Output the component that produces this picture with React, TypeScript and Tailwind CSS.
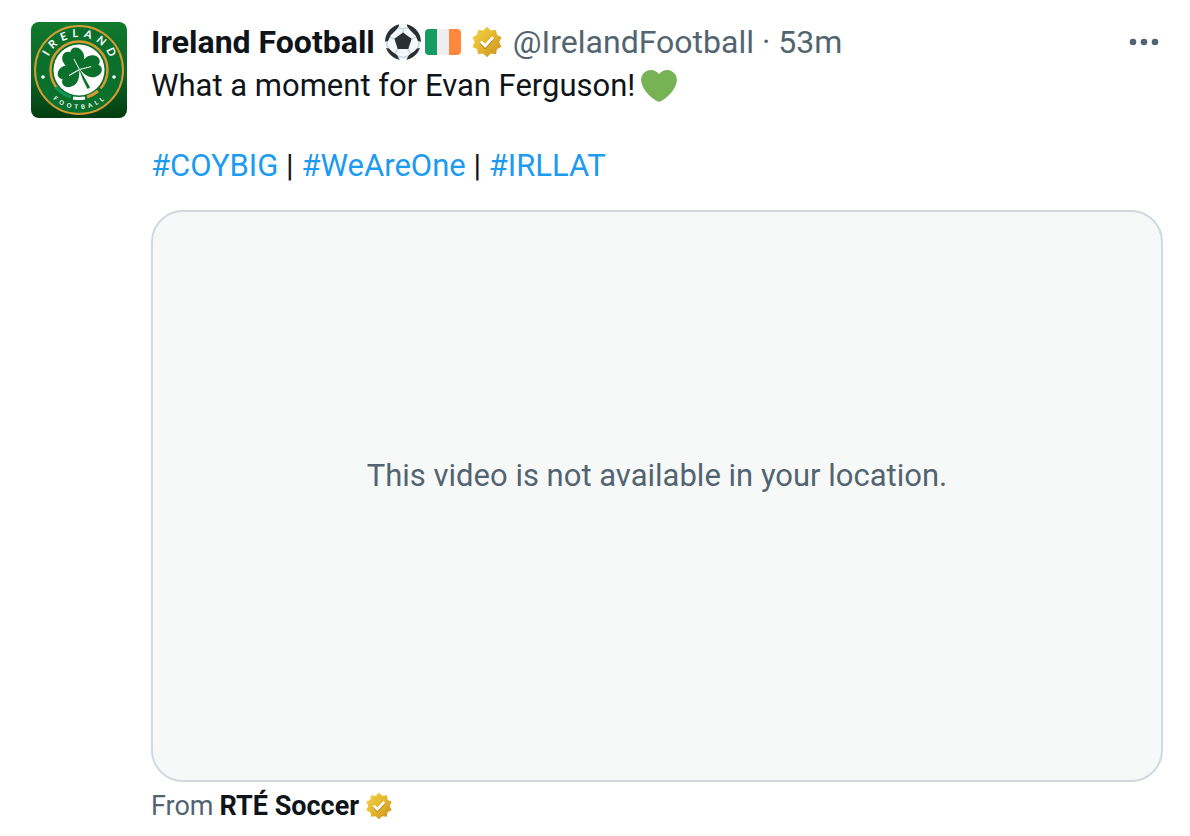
import React from 'react';

const hashtags = ['#COYBIG', '#WeAreOne', '#IRLLAT'];

const Avatar: React.FC = () => (
  <svg viewBox="0 0 96 96" className="h-24 w-24 shrink-0 rounded-lg" role="img" aria-label="Ireland Football crest">
    <defs>
      <linearGradient id="crest-bg" x1="0" y1="0" x2="0" y2="1">
        <stop offset="0" stopColor="#0f7a2c" />
        <stop offset="0.6" stopColor="#0b6125" />
        <stop offset="1" stopColor="#033d10" />
      </linearGradient>
      <path id="crest-top" d="M21 67A33 33 0 1 1 75 67" />
      <path id="crest-bottom" d="M9 48a39 39 0 0 0 78 0" />
    </defs>
    <rect width="96" height="96" fill="url(#crest-bg)" />
    <circle cx="48" cy="48" r="44" fill="#0a702c" stroke="#d69a32" strokeWidth="2" />
    <circle cx="48" cy="48" r="28.5" fill="none" stroke="#d69a32" strokeWidth="2.5" />
    <circle cx="48" cy="48" r="25.5" fill="#fff" />
    {/* Coloured arc under the shamrock */}
    <path d="M26 67A29 29 0 0 0 70 67" fill="none" stroke="#0a702c" strokeWidth="5" />
    <path d="M25 65A29 29 0 0 0 40 75" fill="none" stroke="#129653" strokeWidth="3" />
    <path d="M42 76q6 1 12 0" fill="none" stroke="#fff" strokeWidth="3" />
    <path d="M56 75A29 29 0 0 0 67 69" fill="none" stroke="#d69a32" strokeWidth="3" />
    <g fill="#0a702c" stroke="#fff" strokeWidth="0.9">
      <path d="M48 47q3 10 8.500 20l2.500-1.500q-3-6-11-19z" stroke="none" />
      {[-28, 76, 240].map((angle) => (
        <g key={angle} transform={`translate(48.500 47.500) rotate(${angle})`}>
          <path
            d="M0 0C-4-3-11.500-6-11-14C-10.500-22-3-24 0-19.500C3-24 10.500-22 11-14C11.500-6 4-3 0 0z"
            stroke="none"
          />
          <path d="M0 0V-12" />
        </g>
      ))}
    </g>
    <circle cx="12" cy="55" r="1.8" fill="#fff" />
    <circle cx="83" cy="55" r="1.8" fill="#fff" />
    <g fill="#fff" textAnchor="middle" fontFamily="Lato, sans-serif" fontWeight="700">
      <text fontSize="11" letterSpacing="5">
        <textPath href="#crest-top" startOffset="52%">IRELAND</textPath>
      </text>
      <text fontSize="6" letterSpacing="3.5">
        <textPath href="#crest-bottom" startOffset="51%">FOOTBALL</textPath>
      </text>
    </g>
  </svg>
);

const SoccerBall: React.FC = () => (
  <svg viewBox="0 0 36 36" className="h-9 w-9 shrink-0" role="img" aria-label="Soccer ball">
    <defs>
      <clipPath id="ball">
        <circle cx="18" cy="18" r="18" />
      </clipPath>
    </defs>
    <g clipPath="url(#ball)">
      <rect width="36" height="36" fill="#f5f8fa" />
      <path
        d="M18 9V4M26.500 15l5-2M23 25l3 5M13 25l-3 5M9.500 15l-5-2M11 3l7 2 7-2M3 13l-1 8 2 5M33 13l1 8-2 5M12 32l6 1.500 6-1.500"
        fill="none"
        stroke="#ccd6dd"
        strokeWidth="1.500"
      />
      <path d="M18 8.500l8.600 6.200L23.300 25H12.700L9.400 14.700z" fill="#292f33" />
      <path
        d="M-1 18V-1h15v3L11.500 5.500l-6 6L3 17zM37 18V-1H22v3l2.500 3.500 6 6L33 17zM0 24l4 .5 3 3 5 3.500 3 5.500H0zM36 24l-4 .5-3 3-5 3.500-3 5.500h15z"
        fill="#292f33"
      />
    </g>
  </svg>
);

const IrishFlag: React.FC = () => (
  <svg viewBox="0 0 36 26" className="h-[26px] w-9 shrink-0 rounded" role="img" aria-label="Flag of Ireland">
    <rect width="12" height="26" fill="#169b62" />
    <rect x="12" width="12" height="26" fill="#eee" />
    <rect x="24" width="12" height="26" fill="#ff883e" />
  </svg>
);

const VerifiedBadge: React.FC<{ id: string; className: string }> = ({ id, className }) => (
  <svg viewBox="0 0 22 22" className={className} role="img" aria-label="Verified account">
    <defs>
      <linearGradient id={id} x1="0" y1="0" x2="1" y2="1">
        <stop offset="0" stopColor="#f4d648" />
        <stop offset="0.5" stopColor="#e3b62d" />
        <stop offset="1" stopColor="#cb8c1c" />
      </linearGradient>
    </defs>
    <path
      fill={`url(#${id})`}
      d="M13.596 3.011L11 .5 8.404 3.011l-3.576-.506-.624 3.558-3.190 1.692L2.600 11l-1.586 3.245 3.190 1.692.624 3.558 3.576-.506L11 21.500l2.596-2.511 3.576.506.624-3.558 3.190-1.692L19.400 11l1.586-3.245-3.190-1.692-.624-3.558-3.576.506z"
    />
    <path fill="#b77b18" d="M6 12.200l3.740 3.740 6.200-6.770-1.470-1.360-4.800 5.230-2.260-2.260z" />
    <path fill="#fff" d="M6 11.390l3.740 3.740 6.200-6.770L14.470 7l-4.800 5.230-2.260-2.260z" />
  </svg>
);

const GreenHeart: React.FC = () => (
  <svg viewBox="0 0 36 36" className="h-9 w-9 shrink-0" role="img" aria-label="Green heart">
    <path
      fill="#77b255"
      d="M35.885 11.833c0-5.450-4.418-9.868-9.867-9.868-3.308 0-6.227 1.633-8.018 4.129-1.791-2.496-4.710-4.129-8.017-4.129-5.450 0-9.868 4.417-9.868 9.868 0 .772.098 1.520.266 2.241C1.751 22.587 11.216 31.568 18 34.034c6.783-2.466 16.249-11.447 17.617-19.959.170-.721.268-1.469.268-2.242z"
    />
  </svg>
);

const App: React.FC = () => {
  return (
    <article className="flex gap-6 bg-white pt-[22px] pr-[27px] pl-[31px] font-['Roboto',sans-serif] text-[31px] leading-10 text-[#0f1419]">
      <Avatar />
      <div className="min-w-0 flex-1">
        {/* Author */}
        <header className="flex items-center justify-between text-[32px]">
          <div className="flex items-center">
            <h1 className="mr-2.5 font-bold">Ireland Football</h1>
            <SoccerBall />
            <span className="ml-1">
              <IrishFlag />
            </span>
            <VerifiedBadge id="gold-author" className="ml-2.5 h-8 w-8" />
            <a href="#profile" className="ml-2.5 text-[#536471]">@IrelandFootball</a>
            <span className="mx-2 text-[#536471]">·</span>
            <time className="text-[#536471]">53m</time>
          </div>
          <button type="button" aria-label="More" className="mr-1 text-[#536471]">
            <svg viewBox="0 0 30 8" className="h-2 w-[30px]" fill="currentColor">
              <circle cx="4" cy="4" r="3.300" />
              <circle cx="15" cy="4" r="3.300" />
              <circle cx="26" cy="4" r="3.300" />
            </svg>
          </button>
        </header>

        {/* Post text */}
        <p className="mt-1 flex items-center gap-1.5">
          What a moment for Evan Ferguson!
          <GreenHeart />
        </p>
        <p className="mt-10">
          {hashtags.map((tag, index) => (
            <React.Fragment key={tag}>
              {index > 0 && ' | '}
              <a href={tag} className="text-[#1d9bf0]">{tag}</a>
            </React.Fragment>
          ))}
        </p>

        {/* Video placeholder */}
        <div className="mt-6 flex aspect-[23/13] items-center justify-center rounded-[32px] border-2 border-[#cfd9de] bg-[#f7f9f9] pb-10 text-[#536471]">
          <p>This video is not available in your location.</p>
        </div>

        <footer className="mt-1 flex items-center text-[27px] text-[#536471]">
          From
          <a href="#source" className="ml-1.5 font-bold text-[#0f1419]">RTÉ Soccer</a>
          <VerifiedBadge id="gold-source" className="ml-1.5 h-7 w-7" />
        </footer>
      </div>
    </article>
  );
};

export default App;
